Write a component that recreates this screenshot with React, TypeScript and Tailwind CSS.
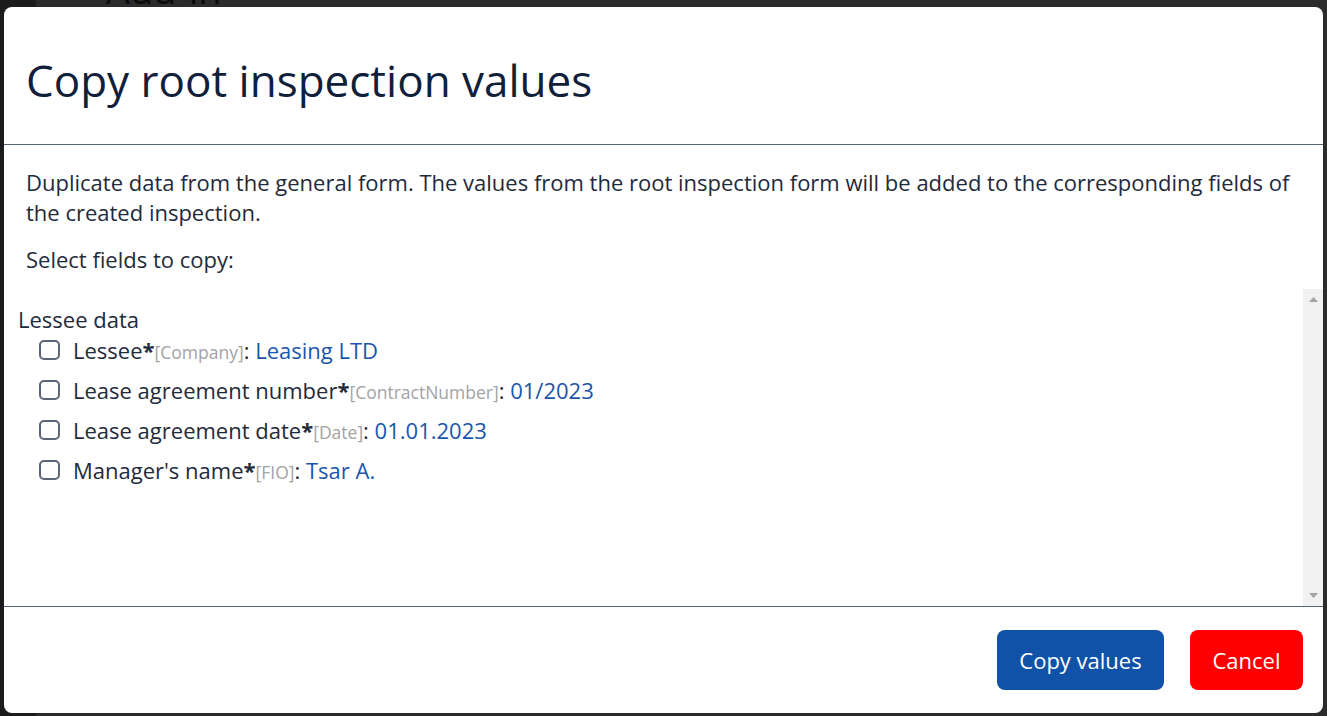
const fields = [
  { label: "Lessee", key: "Company", value: "Leasing LTD" },
  { label: "Lease agreement number", key: "ContractNumber", value: "01/2023" },
  { label: "Lease agreement date", key: "Date", value: "01.01.2023" },
  { label: "Manager's name", key: "FIO", value: "Tsar A." },
];

const FieldRow = ({ label, keyName, value }: { label: string; keyName: string; value: string }) => (
  <label className="flex items-center h-[40px] pl-[21px]">
    <span className="w-[21px] h-[20px] rounded-[5px] border-2 border-[#5b6676] bg-white shrink-0" />
    <span className="ml-[13px] text-[22px] text-[#1f2a3a] whitespace-nowrap">
      {label}
      <b className="font-bold">*</b>
      <span className="text-[17.5px] text-[#a3a3a3]">[{keyName}]</span>
      :{" "}
      <span className="text-[#1a56ad]">{value}</span>
    </span>
  </label>
);

const App = () => (
  <div
    className="relative w-[1327px] h-[716px] overflow-hidden bg-[#2b2b2b]"
    style={{ fontFamily: '"Open Sans", "Noto Sans", sans-serif' }}
  >
    <div className="w-[36px] h-full bg-[#1c1c1c]" />
    <div className="absolute left-[106px] top-[-30px] text-[38px] text-[#0a0a0a] leading-none">Add-in</div>

    <div className="absolute left-[4px] top-[7px] w-[1319px] h-[706px] rounded-[8px] bg-white flex flex-col overflow-hidden">
      <div className="h-[138px] shrink-0 border-b border-[#55647a] flex items-center px-[22px]">
        <h1 className="text-[44px] text-[#10203a] leading-none pt-[8px]">Copy root inspection values</h1>
      </div>

      <div className="flex-1 flex flex-col min-h-0">
        <div className="px-[22px] pt-[22px] pb-[15px] text-[22px] leading-[30px] text-[#1f2a3a]">
          <p>
            Duplicate data from the general form. The values from the root inspection form will be added to the
            corresponding fields of the created inspection.
          </p>
          <p className="mt-[17px]">Select fields to copy:</p>
        </div>

        <div className="flex h-[317px]">
          <div className="flex-1 pl-[14px] pt-[19px]">
            <div className="text-[22px] leading-[22px] text-[#1f2a3a]">Lessee data</div>
            {fields.map(f => (
              <FieldRow key={f.key} label={f.label} keyName={f.key} value={f.value} />
            ))}
          </div>
          <div className="w-[20px] bg-[#f1f1f1] flex flex-col items-center justify-between py-[8px]">
            <svg width="9" height="5" viewBox="0 0 9 5">
              <path d="M0 5 L4.5 0 L9 5 Z" fill="#a3a3a3" />
            </svg>
            <svg width="9" height="5" viewBox="0 0 9 5">
              <path d="M0 0 L4.5 5 L9 0 Z" fill="#a3a3a3" />
            </svg>
          </div>
        </div>
      </div>

      <div className="h-[107px] shrink-0 border-t border-[#55647a] flex items-center justify-end gap-[26px] pr-[20px]">
        <button className="h-[60px] w-[167px] rounded-[8px] bg-[#1052a8] text-white text-[22px]">Copy values</button>
        <button className="h-[60px] w-[113px] rounded-[8px] bg-[#ff0000] text-white text-[22px]">Cancel</button>
      </div>
    </div>
  </div>
);

export default App;
